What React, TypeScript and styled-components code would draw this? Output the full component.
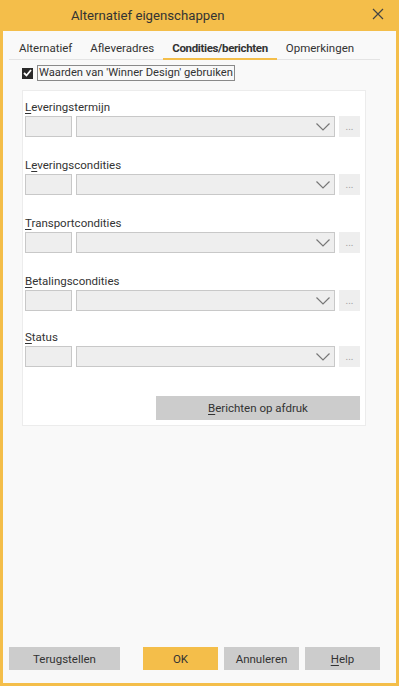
import styled, { createGlobalStyle } from "styled-components";

const GlobalStyle = createGlobalStyle`
  html, body {
    margin: 0;
    padding: 0;
    background: #ffffff;
  }
  body {
    font-family: Roboto, "Noto Sans", "Liberation Sans", sans-serif;
    color: #333333;
  }
  * {
    box-sizing: border-box;
  }
`;

const ORANGE = "#f4be4a";

const Window = styled.div`
  width: 399px;
  height: 686px;
  background: ${ORANGE};
  padding: 0 3px 3px 3px;
  display: flex;
  flex-direction: column;
`;

const TitleBar = styled.div`
  height: 31px;
  display: flex;
  align-items: center;
  justify-content: space-between;
  padding: 0 12px 0 68px;
  font-size: 13.2px;
  color: #333;
`;

const CloseButton = styled.div`
  width: 12px;
  height: 12px;
  display: flex;
  margin-top: -3px;
`;

const Body = styled.div`
  flex: 1;
  background: #f9f9f9;
  display: flex;
  flex-direction: column;
  padding: 7px 16px 13px 6px;
`;

const TabBar = styled.div`
  display: flex;
  height: 22px;
  border-bottom: 1px solid #e4e4e4;
`;

const Tab = styled.div<{ $active?: boolean }>`
  padding: 3px 9px 0 9px;
  font-size: 11.5px;
  font-weight: ${(p) => (p.$active ? 700 : 400)};
  letter-spacing: ${(p) => (p.$active ? "-0.35px" : "0")};
  color: #333;
  border-bottom: 2px solid ${(p) => (p.$active ? ORANGE : "transparent")};
  margin-bottom: -1px;
  white-space: nowrap;

  &:first-child {
    padding-left: 10px;
  }
`;

const CheckRow = styled.div`
  display: flex;
  align-items: center;
  gap: 4px;
  margin: 5px 0 0 13px;
  height: 16px;
`;

const CheckBox = styled.div`
  width: 11px;
  height: 11px;
  background: #2a2a2a;
  display: flex;
  align-items: center;
  justify-content: center;
`;

const CheckLabel = styled.div`
  border: 1px solid #8a8a8a;
  padding: 0 1px;
  font-size: 11.2px;
  line-height: 14px;
  color: #333;
  white-space: nowrap;
`;

const Panel = styled.div`
  margin: 9px 14px 0 13px;
  background: #ffffff;
  border: 1px solid #ececec;
  padding: 9px 5px 5px 2px;
  display: flex;
  flex-direction: column;
`;

const Field = styled.div<{ $gap: number }>`
  display: flex;
  flex-direction: column;
  margin-bottom: ${(p) => p.$gap}px;
`;

const Label = styled.div`
  font-size: 11.5px;
  line-height: 15px;
  height: 15px;
  margin-bottom: 1px;
  color: #333;
  white-space: nowrap;
`;

const Key = styled.span`
  text-decoration: underline;
  text-underline-offset: 2px;
`;

const InputRow = styled.div`
  display: flex;
  align-items: center;
  height: 21px;
`;

const CodeInput = styled.div`
  width: 47px;
  height: 21px;
  background: #eeeeee;
  border: 1px solid #c8c8c8;
`;

const Combo = styled.div`
  width: 261px;
  height: 21px;
  margin-left: 4px;
  background: #eeeeee;
  border: 1px solid #c8c8c8;
  display: flex;
  align-items: center;
  justify-content: flex-end;
  padding-right: 4px;
`;

const DotsButton = styled.div`
  width: 21px;
  height: 21px;
  margin-left: 4px;
  background: #eeeeee;
  color: #a0a0a0;
  font-size: 10px;
  line-height: 10px;
  display: flex;
  align-items: flex-end;
  justify-content: center;
  padding-bottom: 5px;
`;

const PanelFooter = styled.div`
  display: flex;
  justify-content: flex-end;
  margin-top: 7px;
`;

const GrayButton = styled.div<{ $width: number; $height?: number; $primary?: boolean }>`
  width: ${(p) => p.$width}px;
  height: ${(p) => p.$height ?? 23}px;
  background: ${(p) => (p.$primary ? ORANGE : "#cccccc")};
  color: #333;
  font-size: 11.5px;
  display: flex;
  align-items: center;
  justify-content: center;
  white-space: nowrap;
`;

const Footer = styled.div`
  margin-top: auto;
  display: flex;
  gap: 6px;
`;

const Spacer = styled.div`
  width: 11px;
`;

function Chevron() {
  return (
    <svg width="14" height="8" viewBox="0 0 14 8">
      <polyline points="0.5,0.5 7,7 13.5,0.5" fill="none" stroke="#777" strokeWidth="1.2" />
    </svg>
  );
}

function FieldRow({ label, keyIndex, gap }: { label: string; keyIndex: number; gap: number }) {
  return (
    <Field $gap={gap}>
      <Label>
        {label.slice(0, keyIndex)}
        <Key>{label[keyIndex]}</Key>
        {label.slice(keyIndex + 1)}
      </Label>
      <InputRow>
        <CodeInput />
        <Combo>
          <Chevron />
        </Combo>
        <DotsButton>...</DotsButton>
      </InputRow>
    </Field>
  );
}

const fields = [
  { label: "Leveringstermijn", keyIndex: 0, gap: 21 },
  { label: "Leveringscondities", keyIndex: 1, gap: 21 },
  { label: "Transportcondities", keyIndex: 0, gap: 21 },
  { label: "Betalingscondities", keyIndex: 0, gap: 19 },
  { label: "Status", keyIndex: 0, gap: 22 },
];

export default function App() {
  return (
    <>
      <GlobalStyle />
      <Window>
        <TitleBar>
          <span>Alternatief eigenschappen</span>
          <CloseButton>
            <svg width="12" height="12" viewBox="0 0 12 12">
              <path d="M1 1 L11 11 M11 1 L1 11" stroke="#444" strokeWidth="1.2" />
            </svg>
          </CloseButton>
        </TitleBar>
        <Body>
          <TabBar>
            <Tab>Alternatief</Tab>
            <Tab>Afleveradres</Tab>
            <Tab $active>Condities/berichten</Tab>
            <Tab>Opmerkingen</Tab>
          </TabBar>
          <CheckRow>
            <CheckBox>
              <svg width="9" height="8" viewBox="0 0 9 8">
                <polyline points="1,4 3.5,6.5 8,1" fill="none" stroke="#fff" strokeWidth="1.8" />
              </svg>
            </CheckBox>
            <CheckLabel>Waarden van 'Winner Design' gebruiken</CheckLabel>
          </CheckRow>
          <Panel>
            {fields.map((f) => (
              <FieldRow key={f.label} label={f.label} keyIndex={f.keyIndex} gap={f.gap} />
            ))}
            <PanelFooter>
              <GrayButton $width={204} $height={24}>
                <span>
                  <Key>B</Key>erichten op afdruk
                </span>
              </GrayButton>
            </PanelFooter>
          </Panel>
          <Footer>
            <GrayButton $width={111}>Terugstellen</GrayButton>
            <Spacer />
            <GrayButton $width={75} $primary>
              OK
            </GrayButton>
            <GrayButton $width={75}>Annuleren</GrayButton>
            <GrayButton $width={75}>
              <span>
                <Key>H</Key>elp
              </span>
            </GrayButton>
          </Footer>
        </Body>
      </Window>
    </>
  );
}
